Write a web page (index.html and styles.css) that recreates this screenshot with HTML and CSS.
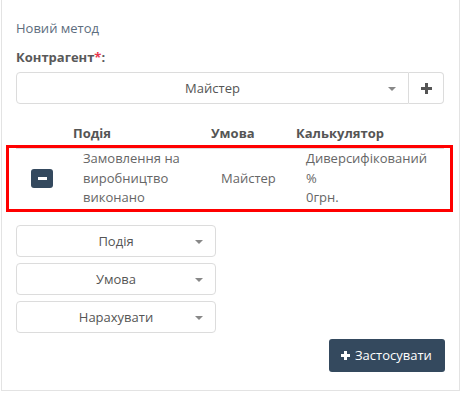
FILE: index.html
```html
<!DOCTYPE html>
<html lang="uk">
<head>
<meta charset="utf-8">
<title>Новий метод</title>
<link rel="stylesheet" href="styles.css">
</head>
<body>
<div class="panel">
  <div class="title">Новий метод</div>
  <div class="label">Контрагент<span class="req">*</span>:</div>
  <div class="input-group">
    <div class="select wide"><span class="sel-text">Майстер</span><i class="caret"></i></div>
    <button class="addon" type="button">
      <svg width="11" height="11" viewBox="0 0 11 11"><rect x="4" y="0" width="3" height="11" fill="#555"/><rect x="0" y="4" width="11" height="3" fill="#555"/></svg>
    </button>
  </div>
  <div class="thead">
    <div class="th"></div>
    <div class="th">Подія</div>
    <div class="th">Умова</div>
    <div class="th">Калькулятор</div>
  </div>
  <div class="highlight">
    <div class="trow">
      <div class="td td-btn"><button class="minus" type="button"><span class="bar"></span></button></div>
      <div class="td">Замовлення на<br>виробництво<br>виконано</div>
      <div class="td td-mid">Майстер</div>
      <div class="td">Диверсифікований<br>%<br>0грн.</div>
    </div>
  </div>
  <div class="selects">
    <div class="select"><span class="sel-text">Подія</span><i class="caret"></i></div>
    <div class="select"><span class="sel-text">Умова</span><i class="caret"></i></div>
    <div class="select"><span class="sel-text">Нарахувати</span><i class="caret"></i></div>
  </div>
  <div class="actions">
    <button class="apply" type="button">
      <svg width="9" height="9" viewBox="0 0 9 9"><rect x="3" y="0" width="3" height="9" fill="#fff"/><rect x="0" y="3" width="9" height="3" fill="#fff"/></svg>
      <span>Застосувати</span>
    </button>
  </div>
</div>
</body>
</html>
```

FILE: styles.css
```css
html, body {
  margin: 0;
  padding: 0;
  background: #fff;
}
body {
  font-family: "Open Sans", "Liberation Sans", sans-serif;
  font-size: 13px;
  color: #555;
}
.panel {
  box-sizing: border-box;
  margin-left: 1px;
  width: 459px;
  height: 391px;
  border: 1px solid #e3e3e3;
  border-top: none;
  padding: 19px 15px 0 14px;
}
.title {
  line-height: 18px;
  color: #5d6d7e;
}
.label {
  margin-top: 11px;
  line-height: 18px;
  font-weight: 700;
  color: #595959;
}
.req {
  color: #e8384f;
}
.input-group {
  display: flex;
  margin-top: 6px;
  height: 32px;
}
.select {
  box-sizing: border-box;
  display: flex;
  align-items: center;
  height: 32px;
  border: 1px solid #dcdcdc;
  border-radius: 4px;
  padding: 0 12px;
  background: #fff;
  color: #555;
}
.select.wide {
  width: 393px;
  border-radius: 4px 0 0 4px;
}
.sel-text {
  flex: 1;
  text-align: center;
  margin-left: 8px;
  line-height: 18px;
}
.caret {
  display: block;
  width: 0;
  height: 0;
  border-top: 4px solid #888;
  border-left: 4px solid transparent;
  border-right: 4px solid transparent;
  margin-top: 2px;
}
.addon {
  box-sizing: border-box;
  width: 35px;
  height: 32px;
  border: 1px solid #dcdcdc;
  border-left: none;
  border-radius: 0 4px 4px 0;
  background: #fff;
  padding: 0;
  display: flex;
  align-items: center;
  justify-content: center;
}
.thead, .trow {
  display: grid;
  grid-template-columns: 57px 138px 85px 1fr;
}
.thead {
  margin-top: 20px;
  padding-bottom: 3px;
  line-height: 18px;
  font-weight: 700;
  color: #555;
}
.highlight {
  border: 3px solid #ff0000;
  margin: 0 -9px 0 -10px;
  padding: 0 6px 0 7px;
}
.trow {
  border-top: 1px solid #dddddd;
  padding-bottom: 1px;
  line-height: 19.5px;
  color: #666;
}
.td {
  padding-left: 10px;
}
.td-btn {
  padding-left: 15px;
  display: flex;
  align-items: center;
}
.td-mid {
  display: flex;
  align-items: center;
}
.minus {
  box-sizing: border-box;
  width: 22px;
  height: 19px;
  border: none;
  border-radius: 3px;
  background: #34495e;
  padding: 0;
  display: flex;
  align-items: center;
  justify-content: center;
}
.bar {
  display: block;
  width: 9px;
  height: 3px;
  background: #fff;
}
.selects {
  margin-top: 13px;
  display: flex;
  flex-direction: column;
  gap: 6px;
  width: 200px;
}
.actions {
  display: flex;
  justify-content: flex-end;
  margin-top: 6px;
}
.apply {
  box-sizing: border-box;
  height: 33px;
  width: 116px;
  border: none;
  border-radius: 3px;
  background: #34495e;
  color: #fff;
  font-family: "Open Sans", "Liberation Sans", sans-serif;
  font-size: 13px;
  display: flex;
  align-items: center;
  gap: 5px;
  padding: 0 0 0 12px;
  margin-right: -1px;
}
```
